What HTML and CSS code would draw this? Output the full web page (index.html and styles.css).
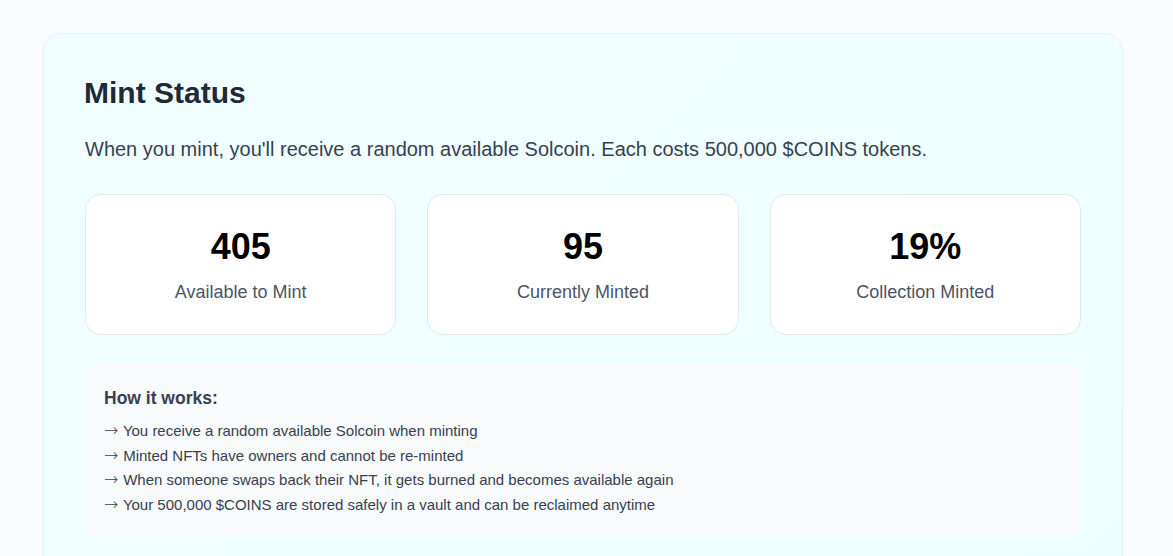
FILE: index.html
```html
<!DOCTYPE html>
<html lang="en">
<head>
<meta charset="utf-8">
<title>Mint Status</title>
<link rel="stylesheet" href="styles.css">
</head>
<body>
<main class="page">
  <section class="panel">
    <h1 class="title">Mint Status</h1>
    <p class="subtitle">When you mint, you'll receive a random available Solcoin. Each costs 500,000 $COINS tokens.</p>
    <div class="stats">
      <div class="stat">
        <div class="stat-value">405</div>
        <div class="stat-label">Available to Mint</div>
      </div>
      <div class="stat">
        <div class="stat-value">95</div>
        <div class="stat-label">Currently Minted</div>
      </div>
      <div class="stat">
        <div class="stat-value">19%</div>
        <div class="stat-label">Collection Minted</div>
      </div>
    </div>
    <div class="how">
      <h3 class="how-title">How it works:</h3>
      <ul class="how-list">
        <li><span class="arrow">→</span> You receive a random available Solcoin when minting</li>
        <li><span class="arrow">→</span> Minted NFTs have owners and cannot be re-minted</li>
        <li><span class="arrow">→</span> When someone swaps back their NFT, it gets burned and becomes available again</li>
        <li><span class="arrow">→</span> Your 500,000 $COINS are stored safely in a vault and can be reclaimed anytime</li>
      </ul>
    </div>
  </section>
</main>
</body>
</html>
```
FILE: styles.css
```css
html, body {
  margin: 0;
  padding: 0;
}
body {
  background: #fafbfc;
  font-family: "Liberation Sans", Arial, sans-serif;
  height: 556px;
  overflow: hidden;
}
.page {
  padding: 33px 50px 0 43px;
}
.panel {
  width: 1080px;
  box-sizing: border-box;
  background: linear-gradient(135deg, #f0feff 0%, #eefeff 100%);
  border: 1px solid #e6f3f7;
  border-radius: 18px;
  padding: 41px 41px 40px 41px;
  box-shadow: 0 1px 3px rgba(15, 23, 42, 0.04);
}
.title {
  margin: 0 0 24px -1px;
  font-size: 30px;
  line-height: 36px;
  font-weight: 700;
  color: #1f2937;
}
.subtitle {
  margin: 0 0 31px 0;
  font-size: 20px;
  line-height: 28px;
  color: #374151;
}
.stats {
  display: grid;
  grid-template-columns: repeat(3, 1fr);
  gap: 31px;
  margin-bottom: 29px;
}
.stat {
  background: #ffffff;
  border: 1px solid #e2e8ee;
  border-radius: 16px;
  padding: 32px 24px 28px;
  text-align: center;
}
.stat-value {
  font-size: 36px;
  line-height: 40px;
  font-weight: 700;
  color: #000000;
}
.stat-label {
  margin-top: 11px;
  font-size: 18px;
  line-height: 28px;
  color: #4b5563;
}
.how {
  background: #f8fafc;
  border-radius: 10px;
  padding: 20px 19px 18px;
}
.how-title {
  margin: 0 0 7px 0;
  font-size: 17.5px;
  line-height: 28px;
  font-weight: 700;
  color: #374151;
}
.how-list {
  list-style: none;
  margin: 0;
  padding: 0;
  font-size: 15px;
  line-height: 24.7px;
  color: #374151;
}
.arrow {
  display: inline-block;
  width: 15px;
  font-family: "DejaVu Sans ExtraLight", "DejaVu Sans", sans-serif;
  font-weight: 200;
  font-size: 17px;
  line-height: 1;
}
```
